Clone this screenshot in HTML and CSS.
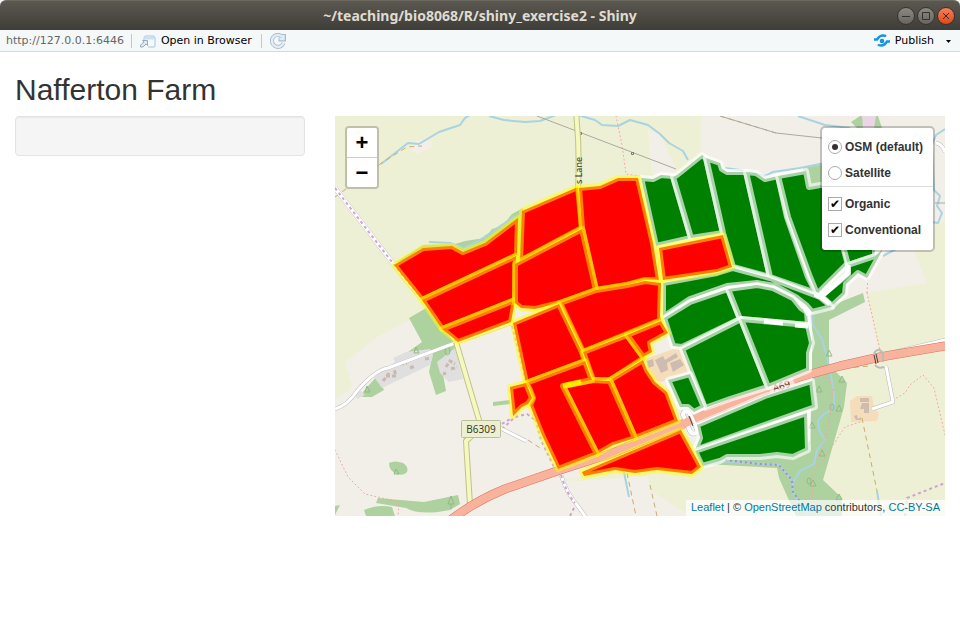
FILE: index.html
```html
<!DOCTYPE html>
<html lang="en">
<head>
<meta charset="utf-8">
<meta name="viewport" content="width=device-width, initial-scale=1">
<title>Nafferton Farm</title>
<link rel="stylesheet" href="styles.css">
</head>
<body>
<header class="titlebar">
  <div class="titlebar-title">~/teaching/bio8068/R/shiny_exercise2 - Shiny</div>
  <div class="window-buttons">
    <button class="window-button" type="button" aria-label="Minimize"><svg viewBox="0 0 16 16"><path d="M4 8.500h8"/></svg></button>
    <button class="window-button" type="button" aria-label="Maximize"><svg viewBox="0 0 16 16"><path d="M4.500 4.500h7v7h-7z"/></svg></button>
    <button class="window-button window-close" type="button" aria-label="Close"><svg viewBox="0 0 16 16"><path d="M5 5l6 6M11 5l-6 6"/></svg></button>
  </div>
</header>
<nav class="toolbar">
  <span class="address">http://127.0.0.1:6446</span>
  <span class="divider"></span>
  <button class="tool" type="button">
    <svg class="open-icon" viewBox="0 0 16 13"><path d="M4 6V3q0-2 2-2h7q2 0 2 2v8q0 1-1 1H8" fill="#f4f9fc" stroke="#a8c4de"/><path d="M4.500 4.500V3q0-1.500 1.500-1.500h7q1.500 0 1.500 1.500v1.500z" fill="#c9e1f8"/><path d="M2.500 5.500h5v5L6 9l-3 3H.5v-2L4 7z" fill="#dfe7ed" stroke="#9badbd"/></svg>
    <span>Open in Browser</span>
  </button>
  <span class="divider"></span>
  <button class="tool" type="button" aria-label="Reload">
    <svg class="reload-icon" viewBox="0 0 16 16"><path d="M12.500 4A6 6 0 1 0 13.500 10M14 1v5.500H8.500" fill="none" stroke="#a9bbce" stroke-width="4"/><path d="M12.500 4A6 6 0 1 0 13.500 10M13.500 2v4H9.500" fill="none" stroke="#e3edf6" stroke-width="2.400"/></svg>
  </button>
  <button class="tool publish" type="button">
    <svg class="publish-icon" viewBox="0 0 16 14"><circle cx="8" cy="7" r="2.300" fill="#1595e0"/><path d="M0 5.500h3Q5.500 1.500 9 1.500q2 0 3 1M16 7.500h-3q-2.500 4-6 4-2 0-3-1" fill="none" stroke="#1595e0" stroke-width="2.400"/></svg>
    <span>Publish</span>
    <svg class="caret" viewBox="0 0 5 3"><path d="M0 0h5L2.500 3z"/></svg>
  </button>
</nav>
<main class="container">
  <h2 class="page-title">Nafferton Farm</h2>
  <div class="row">
    <aside class="sidebar"><form class="well"></form></aside>
    <section class="content">
      <div class="map">
        <svg class="map-canvas" viewBox="335 116 610 400" preserveAspectRatio="xMidYMid slice" role="img" aria-label="Map of organic and conventional fields">
          <g class="land">
            <rect x="335" y="116" width="610" height="400" fill="#f2efe9"/>
            <path class="meadow" d="M335 116H648L653 176 600 220 470 330 410 320 379 336 345 362 352 386 349 390 335 399zM648 116H701V160L650 185zM880 285 927 283 908 238 945 222V516H690L650 490 648 475 700 465 810 450 831 366 867 358 867 295z"/>
            <path d="M648 130 652 174 673 176 676 169 660 134z" fill="#f2efe9"/>
            <path d="M863 293 927 283 917 252 880 255z" fill="#f2efe9"/>
            <path d="M826 365 830 310 867 293 880 358z" fill="#f2efe9"/>
            <path class="meadow" d="M867 294 945 280V350L880 358zM945 220V285L926 282 910 240z"/>
            <path class="meadow" d="M560 480 650 465 648 476 580 481z"/>
            <path d="M408 147 418 140 431 141 432 147 417 154z" fill="#f2efe9"/>
            <path class="wood" d="M395 263 423 245 455 244 465 241 485 238 492 229 502 226 512 214 523 208 522 262 516 263 516 225 485 247 462 256 450 250 424 252zM409 318 435 303 458 342 435 350 410 359 408 352 422 342zM433 352 455 345 454 357 441 363 446 391 436 395 429 372zM363 392 377 376 384 390 372 397 362 397zM493 402 510 400V404L493 406z"/>
            <path class="wood" d="M389 463q6-3 14 0 6 4 4 9-3 4-10 2-8-3-8-11zM376 503 378 498Q400 500 424 502 444 498 458 495L460 504 450 510Q420 516 406 508zM364 510Q378 504 392 507L395 516H366zM335 506 340 505 335 515z"/>
            <path class="wood" d="M812 313 863 293 865 302 829 320 829 365 847 383 844 407 823 480 842 498V516H796L779 478 777 468 705 464 725 455 800 455 810 440 812 390zM803 168 825 164V190L808 187zM851 122 860 116 878 116 882 128H857z"/>
            <path d="M862 116H876L874 128H863z" fill="#ebd6e5"/>
            <path class="built" d="M393 358 406 352 430 349 433 356 430 365 382 388 374 377 395 362zM437 362 455 348 463 379 449 382 440 373zM355 394 360 390 365 395 357 399z"/>
            <path class="farm" d="M645 359 685 345 692 370 661 382 652 378zM850 401 857 396 872 396 874 408 879 413 877 421 851 422z"/>
            <path class="farm-building" d="M655 360 663 356 665 360 676 353 678 357 667 363 668 370 661 373zM670 363 680 359 684 365 673 372zM647 361 653 359 654 366 648 368zM860 398h9v4h-9zM862 403h7v10h-5v-4h-4zM854 416l3-1 1 4 3-2v3h-5z"/>
            <path class="house" d="M383 381 390 372M386 376 396 376 394 369M400 364 407 363M410 368 415 366M425 359 430 358M443 374 446 373M446 367 450 361 455 364M451 369 457 367"/>
          </g>
          <g class="water">
            <path d="M381 164 408 143 419 144 439 132 460 125 465 118 470 115M489 116 504 120 525 122 540 121 556 115M578 115 595 120 602 125 618 126 630 120 648 125 660 134 669 143 683 151 688 160M798 116 825 125 850 128M945 129 936 135 932 145 934 190 940 196 937 206 942 213 938 223 932 222M883 256 898 248M725 168 740 170 765 176 773 172 800 168 830 162M812 313 813 325 822 339 825 350 830 370 834 395 834 408 824 414 818 420 819 430 825 440 817 450 814 464 800 471 793 482 793 493 802 507 809 514M700 467 720 461 780 465 793 482M624 472 629 497M877 491 881 516M429 242 450 243 464 248 480 240 515 216"/>
            <path class="dots" d="M725 460 760 464 779 465 792 480 793 492 806 510"/>
          </g>
          <g class="trees">
            <path d="M448 504l3-8 3 8zM451 504v5M394 474l2-5 3 5zM414 353l2-6 3 6zM365 392l2-6 3 6zM826 356l3-6 3 6zM839 382l3-6 3 6zM836 411l3-6 3 6zM816 392l3-6 3 6zM809 428l3-6 3 6zM819 456l3-6 3 6zM810 486l3-6 3 6zM836 500l3-6 3 6z"/>
            <path d="M445 351a2 3 0 1 0 5 0 2 3 0 1 0-5 0M807 481a2 3 0 1 0 4 0 2 3 0 1 0-4 0M830 407a2 3 0 1 0 4 0 2 3 0 1 0-4 0"/>
          </g>
          <g class="tracks">
            <path class="pink" d="M616 116 622 145 626 174 640 176M335 450 348 477 365 494 399 502 398 516M867 293 880 350M883 252 868 276 867 293M893 400 905 393 910 385 923 375 934 388 945 435M813 514 812 475 823 460 845 427 860 422M833 390 826 370M833 390 828 430 816 465"/>
            <path class="brown" d="M335 197 383 162 407 147 422 146M528 440 543 450M627 473 636 516M650 485 657 516M720 116 776 133M862 418 877 491M845 368 870 366"/>
            <path class="grey" d="M720 116 776 133 822 138M537 116 676 169M935 203 945 203"/>
            <path class="pylon" d="M579.500 132.500h2v2h-2zM631.500 152.500h2v2h-2z"/>
            <path class="casing-edge" d="M335 188 395 266 457 342"/>
            <path class="casing" d="M335 188 395 266 457 342"/>
            <path class="purple" d="M335 188 395 266 457 342M512 326 520 355 526 383 541 440 557 473M502 429 515 417 527 414 535 420M502 424 510 419M570 516 574 508M905 516 907 498 945 483"/>
          </g>
          <g class="roads">
            <path class="minor-edge" d="M335 409Q348 405 357 391 375 370 388 368L455 343 514 322M500 428 526 441M561 475Q566 492 577 505L588 520M886 366 893 402 872 409M945 340 890 353M936 143Q942 144 945 152"/>
            <path class="minor" d="M335 409Q348 405 357 391 375 370 388 368L455 343 514 322M500 428 526 441M561 475Q566 492 577 505L588 520M886 366 893 402 872 409M945 340 890 353M936 143Q942 144 945 152"/>
            <path class="second-edge" d="M576 112Q580 150 578 190L582 225M456 342 479 420Q478 432 466 441L470 505"/>
            <path class="second" d="M576 112Q580 150 578 190L582 225M456 342 479 420Q478 432 466 441L470 505"/>
            <path class="trunk-edge" d="M448 522Q475 501 505 489L560 470 610 454 683 424 745 398 800 377 840 366 880 357 945 346"/>
            <path class="trunk" d="M448 522Q475 501 505 489L560 470 610 454 683 424 745 398 800 377 840 366 880 357 945 346"/>
            <path class="purple" d="M561 475Q566 492 575 503"/>
            <path class="bridge" d="M874 353q5-7 9 1v8M875 365q3 4 9 2"/>
            <path d="M874 355l2 9M876 354l2 9" fill="none" stroke="#444"/>
            <path class="lay-by-edge" d="M684 412q-2 3 0 5l6 14q2 4 6 2 2-3 0-6l-6-13q-2-4-6-2z"/>
            <path class="lay-by" d="M684 412q-2 3 0 5l6 14q2 4 6 2 2-3 0-6l-6-13q-2-4-6-2z"/>
            <path d="M681 425 692 420" stroke="#f9b29c" stroke-width="8" fill="none"/>
            <path d="M689 416l4 10" stroke="#444" fill="none"/>
          </g>
          <g class="labels">
            <rect x="461.500" y="420.500" width="39" height="17" rx="1" fill="#ecefd3" stroke="#bcbf96"/>
            <text x="481" y="433" text-anchor="middle">B6309</text>
            <text class="lane" transform="translate(582 184) rotate(-90)">s Lane</text>
            <path d="M770 391 794 382" stroke="#f7ddd3" stroke-width="9" fill="none"/>
            <text class="trunk-label" transform="translate(774 392) rotate(-17)">A69</text>
          </g>
          <g class="conventional">
            <path d="M641 178 653 179 661 175 673 176 691 238 656 246z"/>
            <path d="M673 177 677 175 702 155 706 158 723 233 691 238z"/>
            <path d="M706 158 720 163 722 169 727 172 746 172 770 277 733 267 723 233z"/>
            <path d="M746 172 756 173 765 179 778 176 787 217 808 277 816 293 770 277z"/>
            <path d="M778 176 806 171 809 187 826 184 838 220 848 263 817 294 810 277 788 217z"/>
            <path d="M840 235 875 235 875 256 848 265z"/>
            <path d="M848 265 875 256 883 249 867 278 858 273 846 284 845 294 832 306 821 296 848 274z"/>
            <path d="M663 283 717 273 733 268 770 278 820 297 832 307 812 312 806 305 797 298 775 286 757 283 727 286 690 299 663 317z"/>
            <path d="M664 318 690 302 728 289 740 319 682 347 673 346z"/>
            <path d="M728 289 757 285 773 288 793 298 801 308 807 312 808 325 740 319z"/>
            <path d="M682 349 741 319 768 387 730 399 705 408z"/>
            <path d="M741 319 808 325 812 343 809 353 809 370 768 387z"/>
            <path d="M668 380 690 374 704 407 694 412 688 407 680 407z"/>
            <path d="M697 425 765 396 812 381 815 407 695 450 700 438z"/>
            <path d="M695 451 807 413 808 450 793 457 777 455 760 457 727 457 720 461 702 466z"/>
          </g>
          <path class="bright" d="M848 265V273L821 297 830 304M820 297 815 294M764 321 783 323M795 325 808 326M805 308 809 315"/>
          <g class="organic">
            <path d="M394 265 423 248 452 246 463 252 485 243 518 218 517 255 422 300z"/>
            <path d="M422 300 516 256 515 300 442 329z"/>
            <path d="M442 329 515 300 511 322 458 342z"/>
            <path d="M522 211 578 187 582 228 520 261z"/>
            <path d="M579 188 600 186 618 178 638 178 653 243 659 280 645 280 627 285 596 290 582 228z"/>
            <path d="M515 264 582 229 596 290 560 303 535 309 521 308 515 303z"/>
            <path d="M560 303 596 290 627 285 645 281 661 283 660 316 661 320 583 352z"/>
            <path d="M513 323 559 304 582 352 585 361 526 383z"/>
            <path d="M583 352 627 335 644 358 610 380 593 380z"/>
            <path d="M627 335 661 321 668 333 650 343 652 352 643 357z"/>
            <path d="M610 380 643 360 647 370 655 382 667 392 678 421 635 438z"/>
            <path d="M563 386 593 380 610 381 635 438 613 445 597 454z"/>
            <path d="M526 383 585 361 592 380 563 386 597 454 558 469 542 435 530 405 533 398 530 390z"/>
            <path d="M510 387 526 383 532 398 528 404 522 407 513 416z"/>
            <path d="M582 472 681 430 701 467 692 474 657 470 635 473 615 470 584 476z"/>
            <path d="M659 248 723 235 732 267 717 272 663 280z"/>
          </g>
          <path d="M563 386 581 382" stroke="#ffea00" stroke-width="5" fill="none"/>
        </svg>
        <div class="zoom-control">
          <button class="zoom-button" type="button" aria-label="Zoom in">+</button>
          <button class="zoom-button" type="button" aria-label="Zoom out">−</button>
        </div>
        <form class="layers">
          <div class="layer-group">
            <label class="layer"><input type="radio" name="base" checked><span>OSM (default)</span></label>
            <label class="layer"><input type="radio" name="base"><span>Satellite</span></label>
          </div>
          <div class="layer-group">
            <label class="layer"><input type="checkbox" checked><span>Organic</span></label>
            <label class="layer"><input type="checkbox" checked><span>Conventional</span></label>
          </div>
        </form>
        <div class="attribution"><a href="#">Leaflet</a> | © <a href="#">OpenStreetMap</a> contributors, <a href="#">CC-BY-SA</a></div>
      </div>
    </section>
  </div>
</main>
</body>
</html>
```
FILE: styles.css
```css
* { box-sizing: border-box; }
body {
  margin: 0;
  background: #fff;
  color: #333;
  font: 14px/20px "Liberation Sans", Arial, sans-serif;
}
button { font: inherit; cursor: pointer; }

.titlebar {
  display: grid;
  grid-template-columns: 1fr auto 1fr;
  align-items: center;
  height: 30px;
  padding: 0 5px;
  border-top: 1px solid #6b6860;
  border-radius: 6px 6px 0 0;
  background: linear-gradient(#5b5850, #3f3d38);
}
.titlebar-title {
  grid-column: 2;
  color: #dfdbd2;
  font: bold 14px/18px "Noto Sans", sans-serif;
}
.window-buttons {
  display: flex;
  gap: 2px;
  justify-self: end;
}
.window-button {
  width: 18px;
  height: 18px;
  padding: 0;
  border: 1px solid #35332f;
  border-radius: 50%;
  background: linear-gradient(#8b8982, #67655e);
}
.window-close { background: linear-gradient(#f58057, #e0481b); }
.window-button svg {
  display: block;
  width: 16px;
  height: 16px;
  fill: none;
  stroke: #33312d;
}

.toolbar {
  display: flex;
  align-items: center;
  gap: 7px;
  height: 22px;
  padding: 1px 9px 0 6px;
  border-bottom: 1px solid #d3d9dc;
  background: #f4f8f9;
  font: 11px/16px "DejaVu Sans", sans-serif;
}
.address { color: #666; }
.divider {
  width: 1px;
  height: 14px;
  margin-right: 1px;
  background: #c4c8ca;
}
.tool {
  display: flex;
  align-items: center;
  gap: 5px;
  padding: 0;
  border: 0;
  background: none;
  color: #000;
}
.tool + .divider { margin-left: 2px; }
.publish { margin-left: auto; }
.open-icon { width: 16px; height: 13px; }
.reload-icon { width: 16px; height: 16px; }
.publish-icon { width: 16px; height: 14px; }
.caret { width: 5px; height: 3px; margin-left: 7px; }

.container { padding: 0 15px; }
.page-title {
  margin: 20px 0 8px;
  font-size: 30px;
  font-weight: 400;
  line-height: 36px;
}
.row {
  display: grid;
  grid-template-columns: 1fr 2fr;
  margin: 0 -15px;
}
.sidebar, .content { padding: 0 15px; }
.well {
  min-height: 40px;
  border: 1px solid #e3e3e3;
  border-radius: 4px;
  background: #f5f5f5;
  box-shadow: inset 0 1px 1px rgba(0, 0, 0, .05);
}

.map {
  position: relative;
  height: 400px;
  overflow: hidden;
  background: #ddd;
}
.map-canvas { display: block; width: 100%; height: 100%; }
.meadow { fill: #eef0d5; }
.wood { fill: #aed1a0; }
.built { fill: #e0dfdf; }
.farm { fill: #f5dcba; }
.farm-building { fill: #ccbdb0; }
.house { fill: none; stroke: #cbb9ad; stroke-width: 3; stroke-dasharray: 4 2; }
.water path { fill: none; stroke: #a9d3e0; stroke-width: 2; stroke-linejoin: round; }
.water .dots { stroke: #a48ac8; stroke-width: 2; stroke-dasharray: 2 3; }
.trees { fill: none; stroke: #8fba85; }
.tracks path { fill: none; stroke-width: 1; }
.tracks .pink { stroke: #f8a49a; stroke-dasharray: 1 3; stroke-width: 1; stroke-linecap: round; }
.tracks .brown { stroke: #c9ad6c; stroke-dasharray: 5 4; }
.tracks .grey { stroke: #aaa9a2; }
.tracks .pylon { stroke: #777; }
.tracks .casing-edge { stroke: #ccc; stroke-width: 5; }
.tracks .casing { stroke: #fff; stroke-width: 4; }
.purple { fill: none; stroke: #cfa2d2; stroke-dasharray: 3 3; }
.tracks .purple, .roads .purple { stroke-width: 2; }
.roads path { stroke-linejoin: round; }
.minor-edge, .minor, .second-edge, .second, .trunk-edge, .trunk { fill: none; }
.minor-edge { stroke: #bbb; stroke-width: 4; }
.minor { stroke: #fff; stroke-width: 3; }
.second-edge { stroke: #bfc389; stroke-width: 6; }
.second { stroke: #f5f9c0; stroke-width: 4; }
.trunk-edge { stroke: #d5735c; stroke-width: 9; }
.trunk { stroke: #f9b29c; stroke-width: 8; }
.bridge { fill: none; stroke: #bbb; stroke-width: 2; }
.lay-by-edge { fill: #f2efe9; stroke: #bbb; stroke-width: 5; }
.lay-by { fill: none; stroke: #fff; stroke-width: 4; }
.labels { font: 10px "Noto Sans", sans-serif; fill: #3d4121; }
.labels .lane { font-size: 9px; fill: #333; }
.labels .trunk-label { font-size: 10px; fill: #702c24; }
.conventional path {
  fill: #008000;
  stroke: #fff;
  stroke-opacity: .65;
  stroke-width: 6;
  stroke-linejoin: round;
}
.organic path {
  fill: #f00;
  stroke: #ff0;
  stroke-opacity: .5;
  stroke-width: 6;
  stroke-linejoin: round;
}
.bright { fill: none; stroke: #fff; stroke-width: 5; }

.zoom-control {
  position: absolute;
  top: 10px;
  left: 10px;
  border: 2px solid rgba(0, 0, 0, .2);
  border-radius: 4px;
  background-clip: padding-box;
}
.zoom-button {
  display: block;
  width: 30px;
  height: 29px;
  padding: 0;
  border: 0;
  background: #fff;
  color: #000;
  font: bold 22px/29px "Liberation Sans", Arial, sans-serif;
}
.zoom-button:first-child {
  height: 30px;
  border-bottom: 1px solid #ccc;
  border-radius: 2px 2px 0 0;
}
.zoom-button:last-child { border-radius: 0 0 2px 2px; }

.layers {
  position: absolute;
  top: 10px;
  right: 10px;
  border: 2px solid rgba(0, 0, 0, .2);
  border-radius: 5px;
  background: #fff;
  background-clip: padding-box;
}
.layer-group { padding: 6px 10px 0 6px; }
.layer-group + .layer-group {
  padding-top: 4px;
  padding-bottom: 7px;
  border-top: 1px solid #ddd;
}
.layer {
  display: flex;
  align-items: center;
  gap: 3px;
  height: 26px;
  font: bold 12px/20px "Liberation Sans", Arial, sans-serif;
}
.layer input {
  display: grid;
  place-items: center;
  width: 14px;
  height: 14px;
  margin: 0;
  border: 1px solid #aaa;
  background: #fff;
  appearance: none;
}
.layer input[type="radio"] { border-radius: 50%; }
.layer input[type="radio"]:checked::before {
  width: 6px;
  height: 6px;
  border-radius: 50%;
  background: #333;
  content: "";
}
.layer input[type="checkbox"]:checked::before {
  color: #000;
  font: bold 12px/12px "DejaVu Sans", sans-serif;
  content: "✔";
}

.attribution {
  position: absolute;
  right: 0;
  bottom: 0;
  padding: 0 5px 2px;
  background: rgba(255, 255, 255, .7);
  font-size: 11px;
  line-height: 14px;
}
.attribution a { color: #0078a8; text-decoration: none; }
```
